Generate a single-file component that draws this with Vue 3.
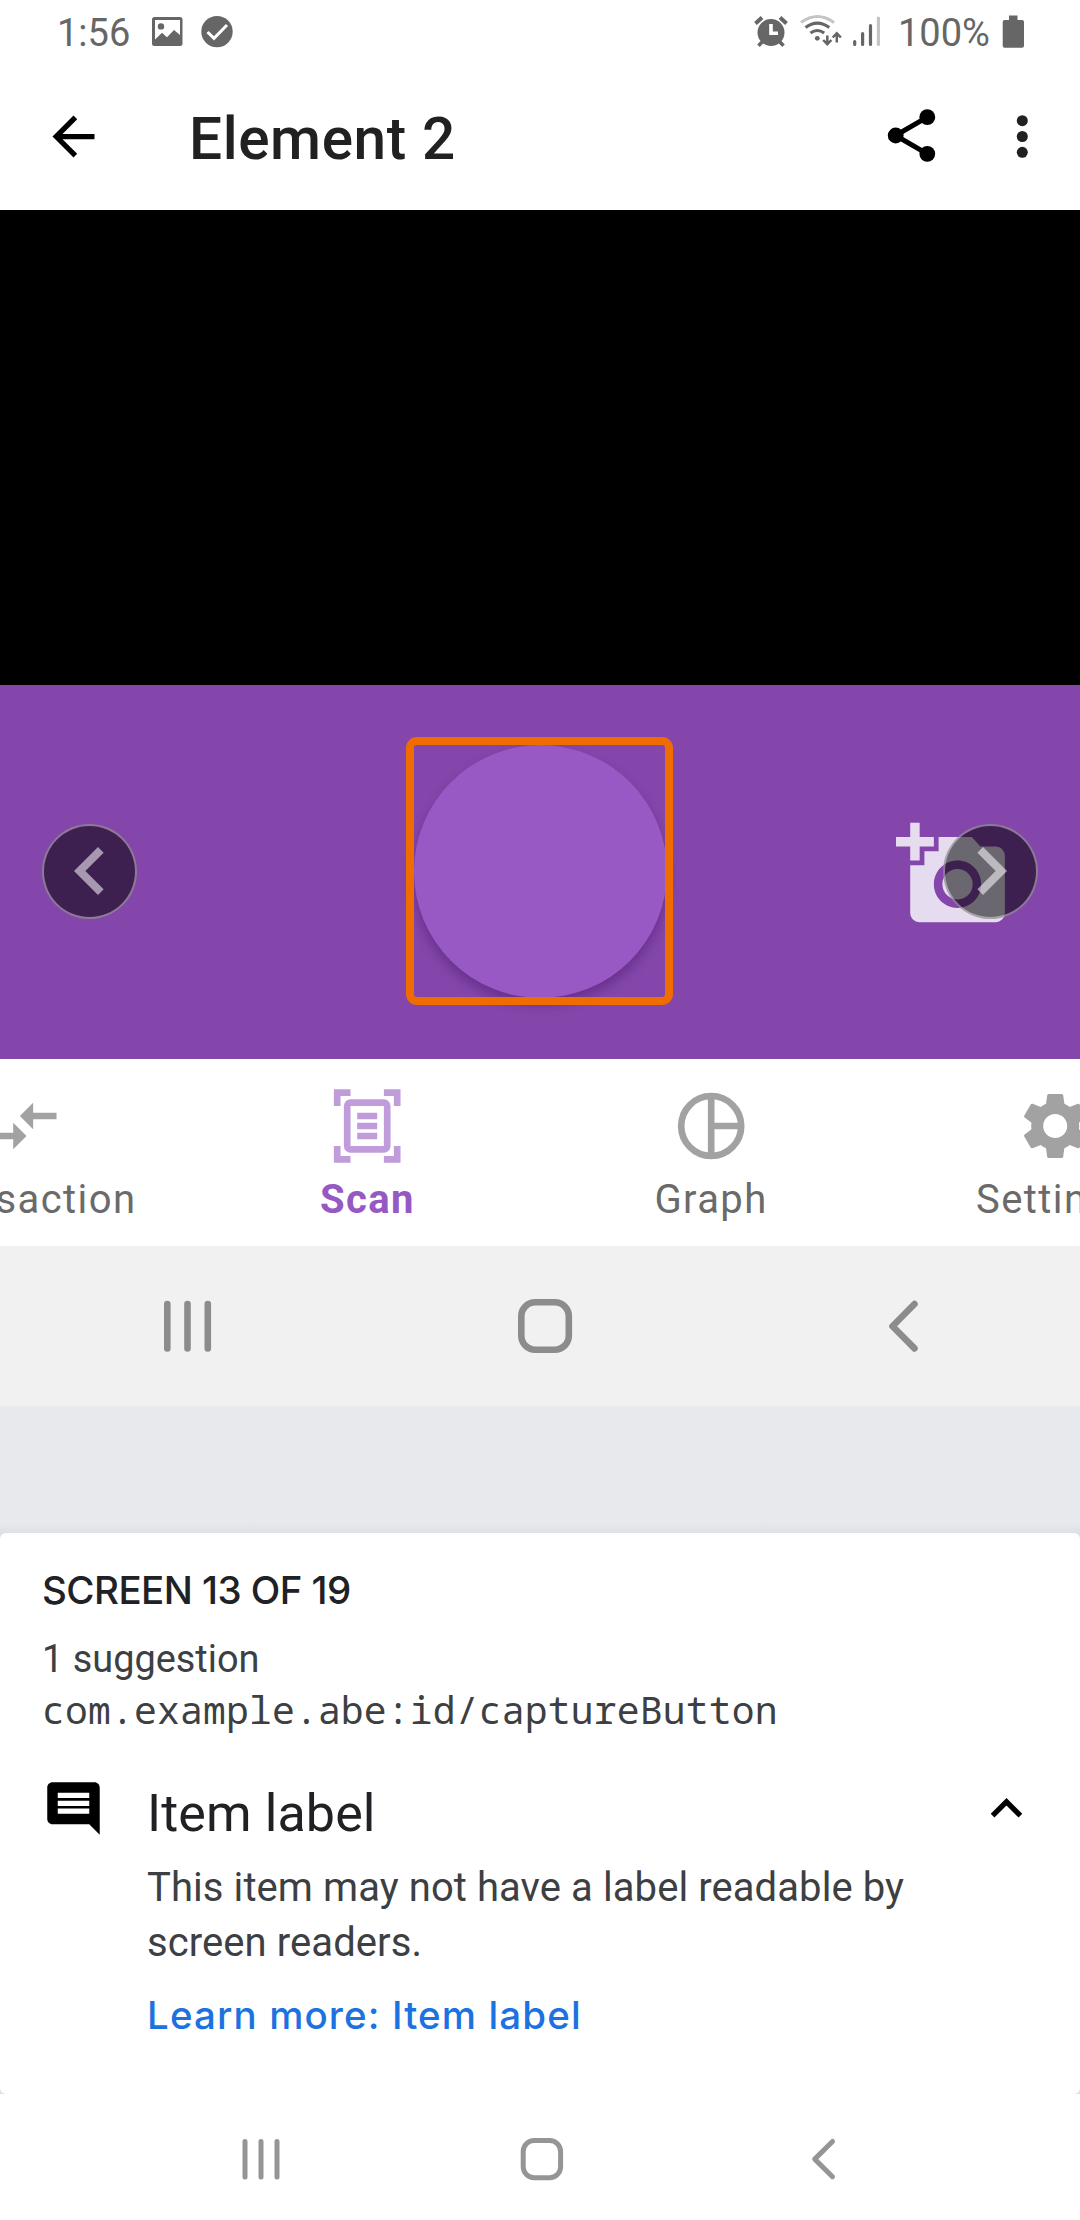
<script setup>
const tabs = [
  { name: 'Transaction', icon: 'arrows' },
  { name: 'Scan', icon: 'scan', active: true },
  { name: 'Graph', icon: 'graph' },
  { name: 'Settings', icon: 'gear' },
]
</script>

<template>
  <main class="screen">
    <header class="status">
      <span class="clock">1:56</span>
      <svg class="status-left" width="100" height="67" viewBox="140 0 100 67">
        <path fill="#666" fill-rule="evenodd" d="M154.500 17h25.500a2.500 2.500 0 0 1 2.500 2.500v24a2.500 2.500 0 0 1-2.500 2.500h-25.500a2.500 2.500 0 0 1-2.500-2.500v-24a2.500 2.500 0 0 1 2.500-2.500zM155 20v19.500l7-6.800 5 4.500 7-7.200 6 5V20zM161 23.200a3.200 3.200 0 1 1 0 6.400 3.200 3.200 0 0 1 0-6.400z" />
        <circle cx="217" cy="31.600" r="15.700" fill="#666" />
        <path d="M207.500 32l6.500 6.300 13-13.300" fill="none" stroke="#fff" stroke-width="3" />
      </svg>
      <span class="spacer"></span>
      <svg width="140" height="67" viewBox="750 0 140 67">
        <g stroke="#666" fill="none">
          <circle cx="771" cy="32.500" r="13.500" fill="#666" stroke="none" />
          <path d="M755.500 23.500l6.500-6M786.500 23.500l-6.500-6" stroke-width="4" />
          <path d="M763 41l-4.500 4.800M779 41l4.500 4.800" stroke-width="3.600" />
          <path d="M771 24v9.200h7" stroke="#fff" stroke-width="3.600" />
          <path d="M801 22.500q16.300-12 33 0" stroke="#c4c4c4" stroke-width="2.800" />
          <path d="M805.500 27.500q11.800-8.700 23.800 0" stroke-width="3" />
          <path d="M810.500 33q6.800-5 13.700 0" stroke-width="3" />
          <circle cx="817.300" cy="38.300" r="2.400" fill="#666" stroke="none" />
          <path d="M827.300 35.500v8M823.200 40l4.100 4.200 4.100-4.200M836.800 42.500v-8M832.700 37.500l4.100-4.200 4.100 4.200" stroke-width="2.500" />
          <g stroke-width="3.200" stroke-linecap="round">
            <path d="M854.700 41.500v3M862.600 33.500v11M870.500 25.500v19" />
            <path d="M878.400 18v26.500" stroke="#c4c4c4" />
          </g>
        </g>
      </svg>
      <span class="percent">100%</span>
      <svg width="34" height="67" viewBox="996 0 34 67">
        <path fill="#666" d="M1009 15.500h8.500v4.500h4.500a2 2 0 0 1 2 2v23.700a2 2 0 0 1-2 2h-17.300a2 2 0 0 1-2-2V22a2 2 0 0 1 2-2h4.300z" />
      </svg>
    </header>

    <div class="toolbar">
      <svg width="63" height="63" viewBox="0 0 24 24"><path d="M20 11H7.830l5.590-5.590L12 4l-8 8 8 8 1.410-1.410L7.830 13H20v-2z" /></svg>
      <h1>Element 2</h1>
      <span class="spacer"></span>
      <svg width="190" height="143" viewBox="870 67 190 143">
        <path d="M927.300 117.200l-31.800 18.300 31.800 18.300" fill="none" stroke="#000" stroke-width="5" />
        <circle cx="895.700" cy="135.500" r="7.900" />
        <circle cx="927.300" cy="117.200" r="7.900" />
        <circle cx="927.300" cy="153.800" r="7.900" />
        <g fill="#212121">
          <circle cx="1022.300" cy="120.700" r="5.500" />
          <circle cx="1022.300" cy="136.500" r="5.500" />
          <circle cx="1022.300" cy="152.300" r="5.500" />
        </g>
      </svg>
    </div>

    <div class="preview"></div>

    <section class="capture">
      <div class="shutter"></div>
      <svg class="photo" width="113.600" height="113.600" viewBox="0 0 24 24">
        <path d="M3 4V1h2v3h3v2H5v3H3V6H0V4h3zm3 6V7h3V4h7l1.830 2H21c1.100 0 2 .9 2 2v12c0 1.100-.9 2-2 2H5c-1.100 0-2-.9-2-2V10h3zm7 9c2.760 0 5-2.240 5-5s-2.240-5-5-5-5 2.240-5 5 2.240 5 5 5zm-3.200-5c0 1.770 1.430 3.200 3.200 3.200s3.200-1.430 3.200-3.200-1.430-3.200-3.200-3.200-3.200 1.430-3.200 3.200z" />
      </svg>
      <div class="highlight"></div>
      <button class="step prev" aria-label="Previous">
        <svg viewBox="0 0 24 24" width="96" height="96"><path d="M15.410 7.410L14 6l-6 6 6 6 1.410-1.410L10.830 12z" /></svg>
      </button>
      <button class="step next" aria-label="Next">
        <svg viewBox="0 0 24 24" width="96" height="96"><path d="M8.590 16.590L13.170 12 8.590 7.410 10 6l6 6-6 6z" /></svg>
      </button>
    </section>

    <nav class="tabs">
      <div v-for="tab in tabs" :key="tab.name" class="tab" :class="{ active: tab.active }">
        <svg width="80.400" height="80" viewBox="0 0 24 24">
          <path v-if="tab.icon === 'arrows'" d="M9.010 14H2v2h7.010v3L13 15l-3.990-4v3zm5.980-1v-3H22V8h-7.010V5L11 9l3.990 4z" />
          <g v-else-if="tab.icon === 'scan'" fill="none" stroke="currentColor" stroke-width="2">
            <path d="M3 6V2h4M17 2h4v4M21 18v4h-4M7 22H3v-4M9 9h6M9 12h6M9 15h6" />
            <rect x="6" y="5" width="12" height="14" rx="1" />
          </g>
          <g v-else-if="tab.icon === 'graph'" fill="none" stroke="currentColor" stroke-width="2">
            <circle cx="12" cy="12" r="9" />
            <path d="M12 3v18M12 12h9" />
          </g>
          <path v-else d="M19.140 12.940c.04-.3.060-.610.060-.940 0-.320-.020-.640-.070-.940l2.030-1.580c.180-.140.230-.410.120-.610l-1.920-3.320c-.120-.220-.370-.290-.590-.220l-2.390.960c-.5-.380-1.030-.7-1.620-.940l-.360-2.540c-.040-.240-.240-.410-.480-.410h-3.840c-.240 0-.430.170-.470.410l-.360 2.540c-.590.240-1.130.570-1.620.940l-2.390-.960c-.220-.080-.470 0-.590.220L2.740 8.870c-.120.210-.080.470.120.610l2.030 1.580c-.050.3-.090.630-.090.940s.020.640.070.940l-2.030 1.580c-.180.140-.230.410-.120.610l1.920 3.320c.120.220.370.290.590.220l2.390-.960c.5.380 1.030.7 1.620.940l.360 2.540c.050.240.240.410.480.410h3.840c.240 0 .440-.170.470-.410l.360-2.540c.590-.240 1.130-.560 1.620-.940l2.390.960c.220.080.470 0 .590-.220l1.920-3.320c.120-.220.070-.470-.120-.610l-2.010-1.580zM12 15.600c-1.980 0-3.600-1.620-3.600-3.600s1.620-3.600 3.600-3.600 3.600 1.620 3.600 3.600-1.620 3.600-3.600 3.600z" />
        </svg>
        <span>{{ tab.name }}</span>
      </div>
    </nav>

    <div class="inner-nav">
      <svg width="1080" height="160" viewBox="0 1246 1080 160">
        <path d="M167.300 1304v44.500M187.500 1304v44.500M207.800 1304v44.500" />
        <rect x="521.300" y="1302.300" width="47.500" height="47.500" rx="14" />
        <path d="M914.500 1304l-22 22.200 22 22.200" />
      </svg>
    </div>

    <div class="gap"></div>

    <section class="details">
      <h2>SCREEN 13 OF 19</h2>
      <p class="count">1 suggestion</p>
      <p class="resource">com.example.abe:id/captureButton</p>
      <article class="item">
        <svg width="63" height="63" viewBox="0 0 24 24"><path d="M21.990 4c0-1.100-.890-2-1.990-2H4c-1.100 0-2 .9-2 2v12c0 1.100.9 2 2 2h14l4 4-.010-18zM18 14H6v-2h12v2zm0-3H6V9h12v2zm0-3H6V6h12v2z" /></svg>
        <div class="body">
          <h3>Item label</h3>
          <p>This item may not have a label readable by<br />screen readers.</p>
          <a>Learn more: Item label</a>
        </div>
        <svg width="63" height="63" viewBox="0 0 24 24"><path d="M12 8l-6 6 1.410 1.410L12 10.830l4.590 4.580L18 14z" /></svg>
      </article>
    </section>

    <footer class="system-nav">
      <svg width="1080" height="126" viewBox="0 2094 1080 126">
        <path d="M245 2141.500v35.500M261 2141.500v35.500M277 2141.500v35.500" />
        <rect x="523.200" y="2140.500" width="37.400" height="37.200" rx="11" />
        <path d="M832.500 2141.500l-17.800 17.600 17.800 17.600" />
      </svg>
    </footer>
  </main>
</template>

<style>
body { margin: 0; background: #fff; }
</style>

<style scoped>
.screen { width: 1080px; height: 2220px; overflow: hidden; background: #fff; font-family: Roboto, sans-serif; }
svg { display: block; flex: none; }
h1, h2, h3, p { margin: 0; font-weight: 400; }
.spacer { flex: 1; }

.status { height: 67px; display: flex; color: #666; font-size: 38px; line-height: 67px; }
.clock { width: 83px; padding-left: 57px; }
.percent { width: 106px; padding-left: 8px; box-sizing: border-box; }
.status > svg:last-child { margin-right: 50px; }

.toolbar { height: 143px; display: flex; align-items: center; padding-left: 42px; box-sizing: border-box; }
.toolbar > svg:first-child { margin-top: -5px; }
.toolbar h1 { margin-left: 84px; font-size: 58.500px; font-weight: 500; line-height: 144px; letter-spacing: .6px; color: #212121; white-space: nowrap; }
.toolbar > svg:last-child { margin-right: 20px; }

.preview { height: 475px; background: #000; }

.capture { position: relative; height: 374px; background: #8446ab; display: flex; align-items: flex-start; }
.shutter { width: 253px; height: 253px; margin: 60px 0 0 413.500px; border-radius: 50%; background: #9859c4; box-shadow: 0 7px 12px rgba(40, 0, 70, .3); }
.photo { margin: 133px 0 0 229.500px; fill: #e6dcf0; }
.highlight { position: absolute; left: 406px; top: 52px; width: 251px; height: 252px; border: 8px solid #ef6c00; border-radius: 11px; }
.step { position: absolute; top: 138.500px; width: 95px; height: 95px; padding: 0; box-sizing: border-box; border: 2.500px solid rgba(255, 255, 255, .4); border-radius: 50%; background: rgba(0, 0, 0, .535); display: flex; align-items: center; justify-content: center; fill: rgba(255, 255, 255, .545); }
.prev { left: 42px; }
.next { left: 943px; }

.tabs { height: 187px; padding-top: 27px; box-sizing: border-box; display: flex; margin-left: -148.200px; width: 1375px; background: #fff; }
.tab { width: 343.700px; display: flex; flex-direction: column; align-items: center; color: #a2a2a2; fill: currentColor; }
.tab span { font-size: 40px; line-height: 68px; letter-spacing: 1.400px; color: #6a6a6a; white-space: nowrap; }
.tab.active { color: #c09cdb; }
.tab.active span { color: #9659c4; font-weight: 700; }

.inner-nav { height: 160px; background: #f1f1f1; }
.inner-nav svg, .system-nav svg { fill: none; stroke-linecap: round; stroke-linejoin: round; }
.inner-nav svg { stroke: #8c8c8c; stroke-width: 6.600px; }
.gap { height: 127px; background: linear-gradient(#e8e9ed 92%, #dfe0e3); }

.details { height: 561px; padding: 27px 42px 0 42px; box-sizing: border-box; background: #fff; border-radius: 6px; box-shadow: 0 0 0 6px #dfe0e3; clip-path: inset(0); }
h2 { font-family: Inter, sans-serif; font-size: 38.500px; font-weight: 500; line-height: 60px; letter-spacing: -.55px; color: #202124; white-space: nowrap; }
.count { margin-top: 13px; font-size: 37.900px; line-height: 52px; color: #3c4043; }
.resource { font-family: "Noto Sans Mono", "DejaVu Sans Mono", monospace; font-size: 38px; line-height: 48px; letter-spacing: .19px; color: #3c4043; white-space: nowrap; }
.item { display: flex; margin-top: 44px; }
.body { flex: 1; padding-top: 5px; margin-left: 42px; white-space: nowrap; }
h3 { font-size: 52px; line-height: 64px; letter-spacing: .1px; color: #202124; }
.body p { margin-top: 14px; font-size: 40px; line-height: 55px; letter-spacing: .08px; color: #3c4043; }
.body a { display: block; margin-top: 18px; font-family: Inter, sans-serif; font-size: 38.500px; line-height: 55px; font-weight: 500; letter-spacing: 1.120px; color: #1b72e0; }

.system-nav { height: 126px; background: #fff; }
.system-nav svg { stroke: #959595; stroke-width: 5px; }
</style>
